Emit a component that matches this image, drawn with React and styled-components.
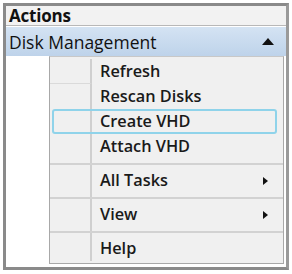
import React from "react";
import styled, { createGlobalStyle } from "styled-components";

const Global = createGlobalStyle`
  html, body { margin: 0; padding: 0; background: #ffffff; }
  body { font-family: "Open Sans", "Noto Sans", sans-serif; }
`;

const Page = styled.div`
  width: 292px;
  height: 274px;
  padding: 3px;
  box-sizing: border-box;
`;

const Frame = styled.div`
  width: 286px;
  height: 267px;
  box-sizing: border-box;
  border: 3px solid #8a8a8a;
  border-right-color: #9a9a9a;
  display: flex;
  flex-direction: column;
  background: #ffffff;
`;

const Header = styled.div`
  height: 20px;
  box-sizing: border-box;
  background: #f2f2f2;
  border-bottom: 1px solid #b8b8b8;
  font-weight: 700;
  font-size: 17px;
  line-height: 19px;
  padding-left: 3px;
  color: #111;
  letter-spacing: -0.2px;
`;

const Spacer = styled.div`
  height: 1px;
  background: #ffffff;
`;

const Group = styled.div`
  height: 29px;
  box-sizing: border-box;
  background: linear-gradient(#d4e3f3, #bed3ea);
  display: flex;
  align-items: center;
  justify-content: space-between;
  padding: 0 12px 0 3px;
  font-size: 17.5px;
  font-weight: 500;
  color: #111;
`;

const Body = styled.div`
  flex: 1;
  display: flex;
  padding-left: 43px;
  padding-right: 2px;
`;

const Menu = styled.div`
  flex: 1;
  align-self: flex-start;
  border: 1px solid #a8a8a8;
  border-top-color: #c8c8c8;
  background: #f0f0f0;
  display: flex;
  flex-direction: column;
  padding: 2px 0 2px 0;
`;

const Row = styled.div`
  height: 25px;
  display: grid;
  grid-template-columns: 42px 1fr 20px;
  align-items: center;
  position: relative;
  font-size: 16.3px;
  font-weight: 600;
  color: #1a1a1a;
`;

const IconCell = styled.div`
  height: 100%;
  box-sizing: border-box;
  border-right: 2px solid #cfcfcf;
  ${(p) => (p.$line ? "border-bottom: 1px solid #dadada;" : "")}
`;

const Label = styled.div`
  padding-left: 8px;
  position: relative;
  white-space: nowrap;
  line-height: 25px;
`;

const Arrow = styled.div`
  width: 0;
  height: 0;
  border-top: 4px solid transparent;
  border-bottom: 4px solid transparent;
  border-left: 5px solid #111;
`;

const Highlight = styled.div`
  position: absolute;
  left: 2px;
  right: 6px;
  top: 0;
  bottom: 0;
  border: 2px solid #8fd3ea;
  border-radius: 3px;
  pointer-events: none;
`;

const Sep = styled.div`
  height: 9px;
  display: grid;
  grid-template-columns: 42px 1fr;
  align-items: center;
`;

const SepIcon = styled.div`
  height: 100%;
  border-right: 2px solid #cfcfcf;
`;

const SepLine = styled.div`
  height: 2px;
  background: #d2d2d2;
  margin-left: -42px;
`;

const Tri = () => (
  <svg width="12" height="7" viewBox="0 0 12 7">
    <path d="M0 7 L6 0 L12 7 Z" fill="#111" />
  </svg>
);

const Item = ({ label, arrow, hl, line }) => (
  <Row>
    {hl && <Highlight />}
    <IconCell $line={line} />
    <Label>{label}</Label>
    {arrow ? <Arrow /> : <span />}
  </Row>
);

const Separator = () => (
  <Sep>
    <SepIcon />
    <SepLine />
  </Sep>
);

export default function App() {
  return (
    <Page>
      <Global />
      <Frame>
        <Header>Actions</Header>
        <Spacer />
        <Group>
          <span>Disk Management</span>
          <Tri />
        </Group>
        <Body>
          <Menu>
            <Item label="Refresh" line />
            <Item label="Rescan Disks" />
            <Item label="Create VHD" hl />
            <Item label="Attach VHD" />
            <Separator />
            <Item label="All Tasks" arrow />
            <Separator />
            <Item label="View" arrow />
            <Separator />
            <Item label="Help" />
          </Menu>
        </Body>
      </Frame>
    </Page>
  );
}
